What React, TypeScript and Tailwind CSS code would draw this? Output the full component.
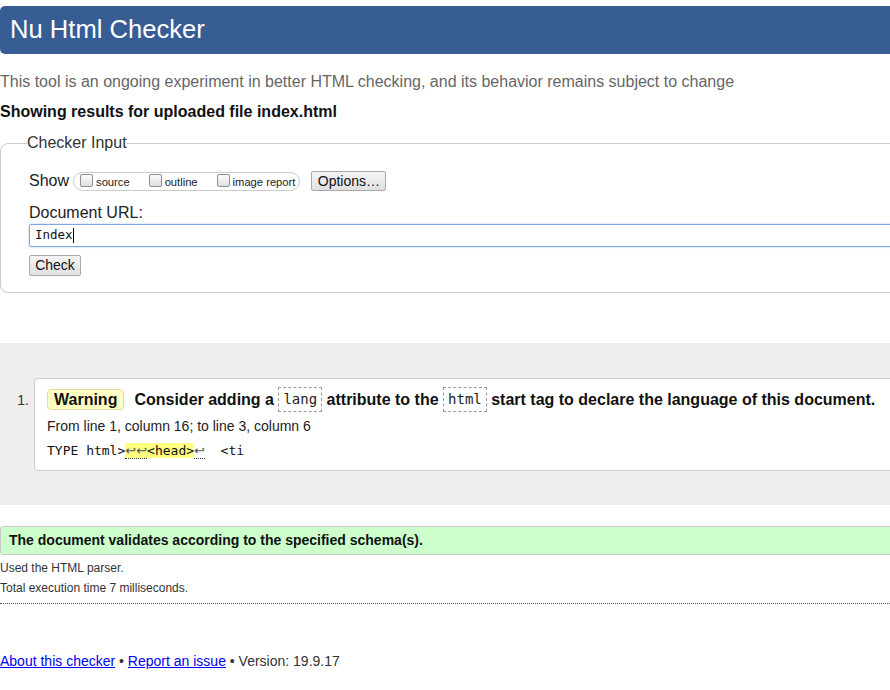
import React from 'react';

const SANS = "font-['Liberation_Sans',Arial,sans-serif]";
const MONO = "font-['DejaVu_Sans_Mono',monospace]";

function Box({ label }: { label: string }) {
  return (
    <span className="flex items-start mr-[19px] last:mr-0">
      <span className="mt-[1px] w-[13px] h-[13px] rounded-[2px] border border-[#8f8f8f] bg-gradient-to-b from-[#fcfcfc] to-[#dedede]" />
      <span className="ml-[3px] text-[11.2px] leading-[16px] pt-[1px] text-[#222]">{label}</span>
    </span>
  );
}

function Code({ children }: { children: React.ReactNode }) {
  return (
    <code className={`${MONO} inline-flex items-center h-[25px] px-[4px] border border-dashed border-[#999] text-[14px] font-normal text-[#222] align-middle`}>
      {children}
    </code>
  );
}

function Ret({ n }: { n: number }) {
  return (
    <span className="font-['DejaVu_Sans',sans-serif] text-[#555] border-b border-dotted border-[#333]">
      {'↩'.repeat(n)}
    </span>
  );
}

export default function App() {
  return (
    <div className={`${SANS} overflow-hidden bg-white text-[#222]`}>
      <div className="w-[1000px]">
        {/* Title bar */}
        <div className="mt-[6px] h-[48px] flex items-center pl-[10px] bg-[#375d94] rounded-l-[5px]">
          <h1 className="text-[25.6px] text-white leading-none">Nu Html Checker</h1>
        </div>

        <p className="mt-[19px] text-[16px] leading-[18px] text-[#666]">
          This tool is an ongoing experiment in better HTML checking, and its behavior remains subject to change
        </p>
        <p className="mt-[12px] text-[16px] leading-[18px] font-bold text-[#111]">
          Showing results for uploaded file index.html
        </p>

        {/* Checker input */}
        <fieldset className="mt-[13px] border border-[#ccc] rounded-[8px] pl-[26px] pb-[16px]">
          <legend className="text-[16px] leading-[18px] text-[#333]">Checker Input</legend>
          <div className="pl-[2px]">
            <div className="mt-[19px] h-[20px] flex items-center">
              <span className="text-[16px] leading-[18px]">Show</span>
              <span className="ml-[4px] h-[19px] flex items-start pl-[6px] pr-[4px] border border-[#ccc] rounded-full">
                <Box label="source" />
                <Box label="outline" />
                <Box label="image report" />
              </span>
              <button className="ml-[11px] h-[20px] w-[75px] flex items-center justify-center text-[14px] border border-[#a9a9a9] rounded-[2px] bg-gradient-to-b from-[#f4f4f4] to-[#e0e0e0] text-[#111]">
                Options…
              </button>
            </div>
            <div className="mt-[13px] text-[16px] leading-[18px]">Document URL:</div>
            <div className="mt-[2px] h-[23px] border border-[#7fa6e6] rounded-[2px] flex items-center pl-[5px] shadow-[0_0_2px_#9fbcef]">
              <span className={`${MONO} text-[12.5px] text-[#111]`}>Index</span>
              <span className="w-px h-[15px] bg-black" />
            </div>
            <button className="mt-[8px] h-[21px] w-[52px] flex items-center justify-center text-[14px] border border-[#a9a9a9] rounded-[2px] bg-gradient-to-b from-[#f4f4f4] to-[#e0e0e0] text-[#111]">
              Check
            </button>
          </div>
        </fieldset>

        {/* Messages */}
        <div className="mt-[50px] bg-[#eee] pt-[35px] pb-[34px] flex items-start">
          <span className="w-[34px] pr-[5px] text-right text-[14px] leading-[16px] mt-[14px] text-[#333]">1.</span>
          <div className="flex-1 bg-white border border-[#ccc] rounded-[4px] pl-[12px] pt-[8px] pb-[11px]">
            <div className="flex items-center h-[25px] text-[16px] font-bold text-[#111] whitespace-pre">
              <span className="h-[21px] px-[6px] flex items-center bg-[#ffffc4] border border-[#e2dca0] rounded-[4px]">Warning</span>
              <span className="ml-[10px]">Consider adding a </span>
              <Code>lang</Code>
              <span> attribute to the </span>
              <Code>html</Code>
              <span> start tag to declare the language of this document.</span>
            </div>
            <p className="mt-[6px] text-[14px] leading-[16px] text-[#222]">From line 1, column 16; to line 3, column 6</p>
            <p className={`${MONO} mt-[9px] text-[13px] leading-[16px] whitespace-pre text-[#111]`}>
              TYPE html&gt;
              <mark className="bg-[#ffff80] text-[#111]">
                <Ret n={2} />&lt;head&gt;
              </mark>
              <Ret n={1} />  &lt;ti
            </p>
          </div>
        </div>

        <div className="mt-[21px] h-[29px] flex items-center pl-[8px] bg-[#ccffcc] border border-[#c8c8c8] rounded-l-[3px]">
          <span className="text-[14px] font-bold text-[#111]">The document validates according to the specified schema(s).</span>
        </div>

        <p className="mt-[6px] text-[12px] leading-[14px] text-[#333]">Used the HTML parser.</p>
        <p className="mt-[6px] text-[12px] leading-[14px] text-[#333]">Total execution time 7 milliseconds.</p>
        <div className="mt-[8px] border-t border-dotted border-[#555]" />

        <p className="mt-[49px] text-[14px] leading-[16px] text-[#333] pb-[20px]">
          <a href="#" className="text-[#0000ee] underline">About this checker</a> •{' '}
          <a href="#" className="text-[#0000ee] underline">Report an issue</a> • Version: 19.9.17
        </p>
      </div>
    </div>
  );
}
